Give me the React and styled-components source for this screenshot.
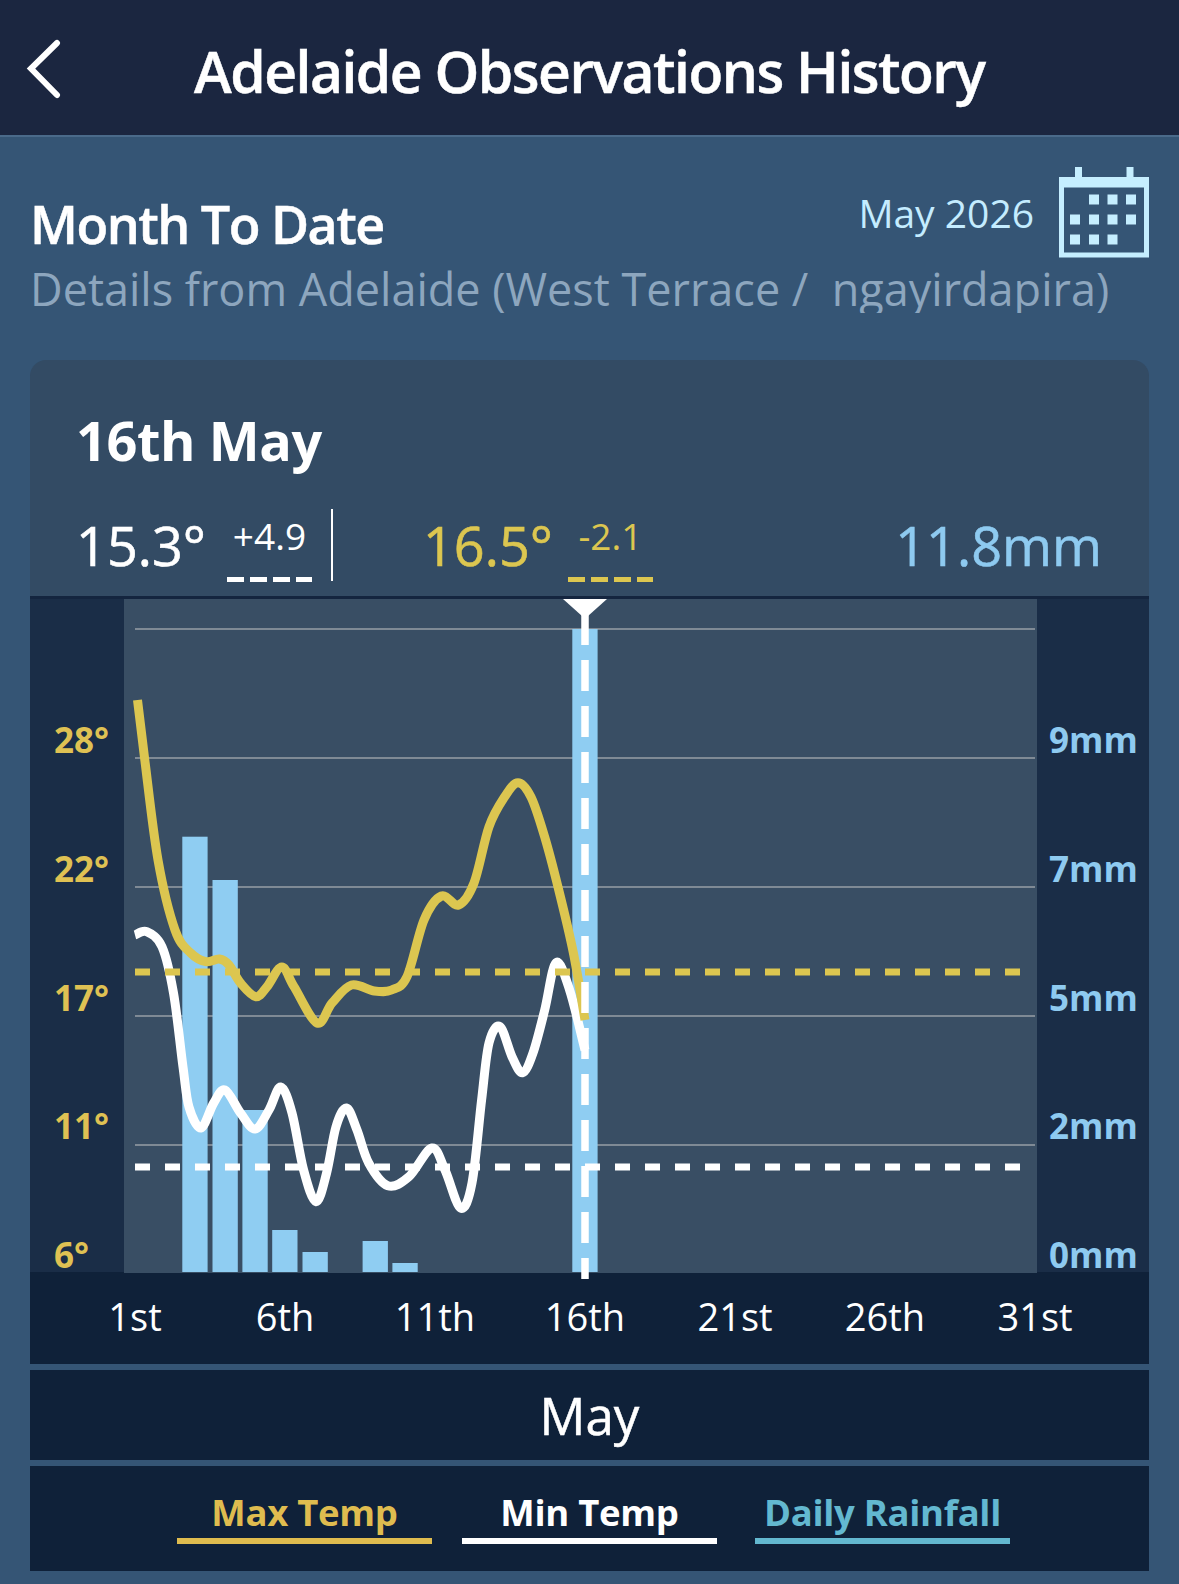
import React from 'react';
import styled, { createGlobalStyle } from 'styled-components';

const GlobalStyle = createGlobalStyle`
  html, body {
    margin: 0;
    padding: 0;
    background: #355575;
  }
  body {
    font-family: "Open Sans", "Noto Sans", sans-serif;
  }
`;

// chart data, in page pixels because the svg viewBox matches the page
const maxTemp = [
  [137.5, 700], [144.8, 760], [158, 860], [175, 930], [190.7, 953], [206, 961.7], [219.4, 959], [229, 965],
  [240.5, 983], [255.8, 996.7], [267, 986.7], [281.8, 967], [294, 986.7], [317, 1023], [332, 1003],
  [351.5, 985], [374.4, 991], [391.6, 990], [407, 976.7], [424, 920], [441.4, 896], [458.6, 905],
  [474, 883], [489, 826.7], [504.5, 797], [518, 782.7], [531, 797], [544.7, 837], [558, 887], [573.4, 953], [585, 1020],
];

const minTemp = [
  [135, 935], [146.7, 931.7], [162, 946.7], [173.5, 993], [183, 1067], [189, 1107], [201, 1128],
  [213.7, 1103], [225, 1090], [240.5, 1113], [255, 1129], [269, 1110], [280.7, 1087], [292, 1113],
  [303.6, 1170], [316, 1201.7], [326.6, 1173], [336, 1126.7], [346.5, 1108], [357, 1130], [368.7, 1163],
  [387.8, 1185.7], [409, 1176.7], [431.8, 1148], [445, 1170], [460.5, 1208], [472, 1183], [481.6, 1100],
  [489, 1043], [500, 1026.7], [512, 1056.7], [522.5, 1072.7], [533, 1053], [544.7, 1010], [556, 962.7],
  [569.6, 990], [585, 1050],
];

const bars = [
  [182.3, 836.7], [212.5, 880], [242.4, 1110], [272.2, 1230], [302.5, 1252], [362.6, 1241], [392.4, 1263], [572.3, 629],
];

const gridLines = [629, 758, 887, 1016, 1145];
const tempLabels = ['28°', '22°', '17°', '11°', '6°'];
const rainLabels = ['9mm', '7mm', '5mm', '2mm', '0mm'];
const dayLabels = ['1st', '6th', '11th', '16th', '21st', '26th', '31st'];

const calendarCells = [
  [1089, 194], [1107.5, 194], [1126, 194],
  [1070, 214], [1089, 214], [1107.5, 214], [1126, 214],
  [1070, 234], [1089, 234], [1107.5, 234],
];

const smoothPath = (pts) => {
  let d = `M${pts[0][0]} ${pts[0][1]}`;
  for (let i = 0; i < pts.length - 1; i++) {
    const p0 = pts[i - 1] || pts[i];
    const p1 = pts[i];
    const p2 = pts[i + 1];
    const p3 = pts[i + 2] || p2;
    const c1x = p1[0] + (p2[0] - p0[0]) / 6;
    const c1y = p1[1] + (p2[1] - p0[1]) / 6;
    const c2x = p2[0] - (p3[0] - p1[0]) / 6;
    const c2y = p2[1] - (p3[1] - p1[1]) / 6;
    d += ` C${c1x.toFixed(1)} ${c1y.toFixed(1)} ${c2x.toFixed(1)} ${c2y.toFixed(1)} ${p2[0]} ${p2[1]}`;
  }
  return d;
};

const BackIcon = () => (
  <BackSvg viewBox="0 0 36 60" width="36" height="60">
    <path d="M31 4 L5 29.5 L31 56" fill="none" stroke="#fff" strokeWidth="6" strokeLinecap="round" strokeLinejoin="miter" />
  </BackSvg>
);

const CalendarIcon = () => (
  <svg viewBox="1059 166.5 90 90.5" width="90" height="90.5">
    <rect x="1075" y="166.5" width="7" height="14" fill="#c5eeff" />
    <rect x="1126.5" y="166.5" width="7" height="14" fill="#c5eeff" />
    <rect x="1061.5" y="179" width="85" height="75.5" fill="none" stroke="#c5eeff" strokeWidth="5" />
    <rect x="1059" y="177" width="90" height="10" fill="#c5eeff" />
    {calendarCells.map(([x, y]) => (
      <rect key={`${x}-${y}`} x={x} y={y} width="10" height="10" fill="#c5eeff" />
    ))}
  </svg>
);

const ChartDrawing = () => (
  <PlotSvg viewBox="124 599 913 673" width="913" height="673">
    {gridLines.map((y) => (
      <line key={y} x1="135" x2="1035" y1={y} y2={y} stroke="#7f8a95" strokeWidth="2" />
    ))}
    {bars.map(([x, y]) => (
      <rect key={x} x={x} y={y} width="25.3" height={1272 - y} fill="#8fcdf2" />
    ))}
    <path d={smoothPath(minTemp)} fill="none" stroke="#fff" strokeWidth="9" />
    <path d={smoothPath(maxTemp)} fill="none" stroke="#dcc650" strokeWidth="9" />
    <line x1="135" x2="1021" y1="972" y2="972" stroke="#dcc650" strokeWidth="7" strokeDasharray="15 15" />
    <line x1="135" x2="1021" y1="1167" y2="1167" stroke="#fff" strokeWidth="7" strokeDasharray="15 15" />
    <line x1="585" x2="585" y1="614" y2="1279" stroke="#fff" strokeWidth="7.5" strokeDasharray="31 15" />
    <path d="M563 599 L607 599 L588 616 L582 616 Z" fill="#fff" />
  </PlotSvg>
);

const App = () => {
  return (
    <>
      <GlobalStyle />
      <Page>
        <Header>
          <BackIcon />
          <HeaderTitle>Adelaide Observations History</HeaderTitle>
        </Header>

        <Intro>
          <IntroRow>
            <IntroTitle>Month To Date</IntroTitle>
            <DatePicker>
              <DateLabel>May 2026</DateLabel>
              <CalendarIcon />
            </DatePicker>
          </IntroRow>
          <IntroSub>Details from Adelaide (West Terrace /  ngayirdapira)</IntroSub>
        </Intro>

        <Card>
          <CardHead>
            <DayTitle>16th May</DayTitle>
            <StatRow>
              <StatValue $color="#fff">15.3°</StatValue>
              <Delta $color="#fff" $left={21}>
                <DeltaText>+4.9</DeltaText>
                <DeltaDashes />
              </Delta>
              <Divider />
              <StatValue $color="#dcc650" $left={90}>16.5°</StatValue>
              <Delta $color="#dcc650" $left={15}>
                <DeltaText>-2.1</DeltaText>
                <DeltaDashes />
              </Delta>
              <RainValue>11.8mm</RainValue>
            </StatRow>
          </CardHead>

          <ChartRow>
            <LeftAxis>
              {tempLabels.map((t) => (
                <AxisLabel key={t}>{t}</AxisLabel>
              ))}
            </LeftAxis>
            <Plot>
              <ChartDrawing />
            </Plot>
            <RightAxis>
              {rainLabels.map((t) => (
                <AxisLabel key={t}>{t}</AxisLabel>
              ))}
            </RightAxis>
          </ChartRow>

          <DayAxis>
            {dayLabels.map((d) => (
              <DayLabel key={d}>{d}</DayLabel>
            ))}
          </DayAxis>

          <MonthBar>May</MonthBar>

          <Legend>
            <LegendItem $color="#dfbc4f">Max Temp</LegendItem>
            <LegendItem $color="#fff" $left={30}>Min Temp</LegendItem>
            <LegendItem $color="#63b8d0" $left={38}>Daily Rainfall</LegendItem>
          </Legend>
        </Card>
      </Page>
    </>
  );
};

const Page = styled.div`
  width: 1179px;
  height: 1584px;
  overflow: hidden;
  background: #355575;
`;

const Header = styled.header`
  display: flex;
  align-items: center;
  height: 132px;
  padding: 3px 0 0 26px;
  border-bottom: 2px solid #4a6a8a;
  background: #1b2640;
`;

const BackSvg = styled.svg`
  flex: none;
`;

const HeaderTitle = styled.h1`
  margin: 3px 0 0 132px;
  font-size: 57px;
  font-weight: 600;
  letter-spacing: -1.5px;
  line-height: 70px;
  -webkit-text-stroke: 0.5px currentColor;
  color: #fff;
  white-space: nowrap;
`;

const Intro = styled.section`
  height: 223px;
  padding: 30px 30px 0 30px;
  box-sizing: border-box;
`;

const IntroRow = styled.div`
  display: flex;
  justify-content: space-between;
  align-items: flex-start;
  height: 90px;
`;

const IntroTitle = styled.h2`
  margin: 25px 0 0;
  font-size: 52px;
  font-weight: 600;
  letter-spacing: -1.5px;
  line-height: 64px;
  -webkit-text-stroke: 0.5px currentColor;
  color: #fff;
`;

const DatePicker = styled.div`
  display: flex;
  align-items: flex-start;
  gap: 25px;
`;

const DateLabel = styled.span`
  margin-top: 19px;
  font-size: 39px;
  font-weight: 400;
  line-height: 54px;
  color: #c4ecff;
`;

const IntroSub = styled.p`
  margin: 0;
  height: 56px;
  overflow: hidden;
  font-size: 45px;
  font-weight: 400;
  line-height: 64px;
  color: #8da6be;
  white-space: pre;
`;

const Card = styled.main`
  width: 1119px;
  margin-left: 30px;
  border-radius: 16px 16px 0 0;
  overflow: hidden;
  background: #355575;
`;

const CardHead = styled.div`
  height: 236px;
  box-sizing: border-box;
  padding: 48px 0 0 46px;
  background: #334b64;
`;

const DayTitle = styled.h3`
  margin: 0;
  font-size: 54px;
  font-weight: 700;
  letter-spacing: -0.4px;
  line-height: 64px;
  color: #fff;
`;

const StatRow = styled.div`
  display: flex;
  align-items: flex-start;
  height: 80px;
  margin-top: 37px;
`;

const StatValue = styled.span`
  margin-left: ${(p) => p.$left || 0}px;
  font-size: 54px;
  line-height: 72px;
  -webkit-text-stroke: 0.6px currentColor;
  color: ${(p) => p.$color};
`;

const Delta = styled.div`
  display: flex;
  flex-direction: column;
  align-items: center;
  margin-left: ${(p) => p.$left}px;
  color: ${(p) => p.$color};
`;

const DeltaText = styled.span`
  margin-top: 2px;
  font-size: 37px;
  font-weight: 400;
  line-height: 50px;
`;

const DeltaDashes = styled.i`
  display: block;
  width: 85px;
  height: 5px;
  margin-top: 16px;
  background: repeating-linear-gradient(90deg, currentColor 0 17px, transparent 17px 23px);
`;

const Divider = styled.span`
  width: 2px;
  height: 72px;
  margin-left: 19px;
  background: #fff;
`;

const RainValue = styled.span`
  margin-left: auto;
  padding-right: 47px;
  font-size: 54px;
  line-height: 72px;
  -webkit-text-stroke: 0.6px currentColor;
  color: #8ecaf0;
`;

const ChartRow = styled.div`
  display: grid;
  grid-template-columns: 94px 913px 112px;
  height: 676px;
  box-sizing: border-box;
  border-top: 3px solid #14253f;
  background: #1a2d47;
`;

const AxisColumn = styled.div`
  display: flex;
  flex-direction: column;
  gap: 92.75px;
  padding-top: 123px;
`;

const LeftAxis = styled(AxisColumn)`
  padding-left: 24px;
  color: #dfc153;
`;

const RightAxis = styled(AxisColumn)`
  padding-left: 12px;
  color: #8ecaf0;
`;

const AxisLabel = styled.span`
  font-size: 35px;
  font-weight: 700;
  line-height: 36px;
  height: 36px;
`;

const Plot = styled.div`
  position: relative;
  z-index: 1;
  background: #394e64;
`;

const PlotSvg = styled.svg`
  display: block;
  overflow: visible;
`;

const DayAxis = styled.div`
  display: grid;
  grid-template-columns: repeat(7, 150px);
  align-items: center;
  height: 92px;
  padding: 0 0 4px 30px;
  box-sizing: border-box;
  background: #0f2139;
`;

const DayLabel = styled.span`
  font-size: 38px;
  line-height: 50px;
  text-align: center;
  color: #fff;
`;

const MonthBar = styled.div`
  display: flex;
  align-items: center;
  justify-content: center;
  height: 90px;
  margin-top: 6px;
  font-size: 51px;
  line-height: 68px;
  -webkit-text-stroke: 0.5px currentColor;
  color: #fff;
  background: #0f2139;
`;

const Legend = styled.div`
  display: flex;
  height: 105px;
  margin-top: 6px;
  padding: 21px 0 0 147px;
  box-sizing: border-box;
  background: #0f2139;
`;

const LegendItem = styled.div`
  width: 255px;
  height: 51px;
  margin-left: ${(p) => p.$left || 0}px;
  border-bottom: 6px solid ${(p) => p.$color};
  font-size: 36.5px;
  font-weight: 700;
  letter-spacing: -0.3px;
  line-height: 50px;
  text-align: center;
  color: ${(p) => p.$color};
`;

export default App;
